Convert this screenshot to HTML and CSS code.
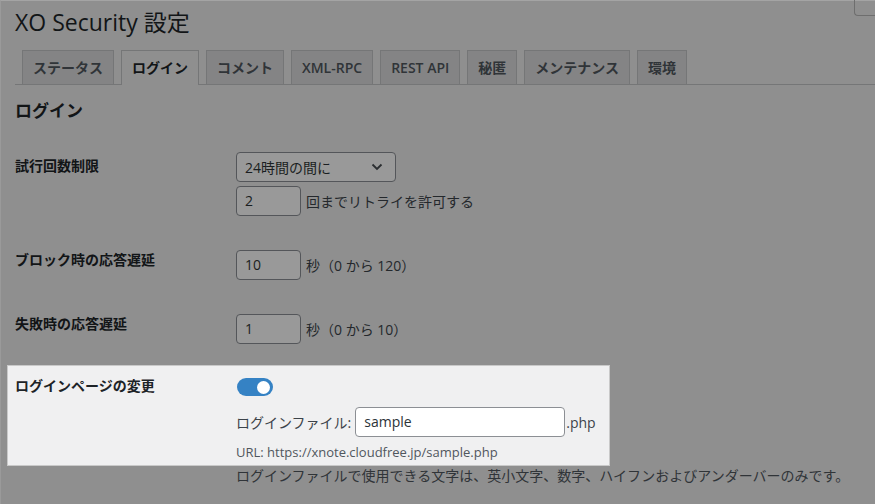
FILE: index.html
```html
<!DOCTYPE html>
<html lang="ja">
<head>
<meta charset="utf-8">
<title>XO Security 設定</title>
<link rel="stylesheet" href="styles.css">
</head>
<body>
<div class="page">
  <div class="header">
    <h1 class="title">XO Security 設定</h1>
    <div class="help-tab"></div>
  </div>
  <nav class="tabs">
    <span class="tab">ステータス</span>
    <span class="tab active">ログイン</span>
    <span class="tab">コメント</span>
    <span class="tab">XML-RPC</span>
    <span class="tab">REST API</span>
    <span class="tab">秘匿</span>
    <span class="tab">メンテナンス</span>
    <span class="tab">環境</span>
  </nav>
  <h2 class="section-title">ログイン</h2>

  <div class="row row-1">
    <div class="label label-1">試行回数制限</div>
    <div class="fields">
      <div class="select"><span>24時間の間に</span>
        <svg class="chev" width="12" height="8" viewBox="0 0 12 8"><path d="M1.5 1.5 L6 6 L10.5 1.5" fill="none" stroke="#2a2d30" stroke-width="1.8"/></svg>
      </div>
      <div class="inline"><span class="num">2</span><span class="after">回までリトライを許可する</span></div>
    </div>
  </div>

  <div class="row row-2">
    <div class="label">ブロック時の応答遅延</div>
    <div class="fields">
      <div class="inline"><span class="num">10</span><span class="after">秒（0 から 120）</span></div>
    </div>
  </div>

  <div class="row row-3">
    <div class="label">失敗時の応答遅延</div>
    <div class="fields">
      <div class="inline"><span class="num">1</span><span class="after">秒（0 から 10）</span></div>
    </div>
  </div>

  <div class="highlight">
    <div class="hl-label">ログインページの変更</div>
    <div class="hl-fields">
      <div class="toggle"><span class="knob"></span></div>
      <div class="file-row"><span class="file-label">ログインファイル:</span><span class="file-input">sample</span><span class="php">.php</span></div>
      <div class="url">URL: https://xnote.cloudfree.jp/sample.php</div>
    </div>
  </div>
  <p class="desc">ログインファイルで使用できる文字は、英小文字、数字、ハイフンおよびアンダーバーのみです。</p>
</div>
</body>
</html>
```

FILE: styles.css
```css
html, body {
  margin: 0;
  padding: 0;
  background: #8f8f8f;
  overflow: hidden;
}
body {
  width: 875px;
  height: 504px;
  font-family: "Open Sans", "Noto Sans CJK JP", sans-serif;
  font-size: 14px;
  color: #121517;
}
.page {
  height: 503px;
  border-top: 1px solid #a4a4a4;
  border-left: 1px solid #9a9a9a;
  padding-left: 14px;
}
.header {
  display: flex;
  justify-content: space-between;
  align-items: flex-start;
}
.title {
  margin: 7px 0 0 0;
  font-size: 23px;
  font-weight: 400;
  line-height: 29px;
  color: #121517;
}
.help-tab {
  width: 20px;
  height: 15px;
  border: 1px solid #6e6e6e;
  border-top: none;
  border-right: none;
  border-bottom-left-radius: 4px;
  margin-top: -1px;
}
.tabs {
  display: flex;
  gap: 7px;
  margin-top: 13px;
  padding-left: 7px;
  border-bottom: 1px solid #757677;
  height: 34px;
}
.tab {
  display: block;
  height: 34px;
  box-sizing: border-box;
  padding: 5px 10px 0;
  border: 1px solid #757677;
  border-bottom: none;
  background: #848485;
  color: #303438;
  font-weight: 600;
  line-height: 24px;
  white-space: nowrap;
}
.tab.active {
  background: #8f8f8f;
  color: #121517;
  height: 35px;
}
.section-title {
  margin: 14px 0 0 0;
  font-size: 17px;
  line-height: 24px;
  font-weight: 700;
}
.row {
  display: flex;
}
.row-1 { margin-top: 29px; }
.row-2 { margin-top: 34px; }
.row-3 { margin-top: 34px; }
.label {
  width: 221px;
  flex: none;
  font-weight: 700;
  line-height: 20px;
}
.label-1 { padding-top: 4px; }
.fields {
  display: flex;
  flex-direction: column;
  gap: 4px;
}
.select {
  width: 160px;
  height: 30px;
  box-sizing: border-box;
  border: 1px solid #54565a;
  border-radius: 4px;
  background: #999999;
  display: flex;
  align-items: center;
  justify-content: space-between;
  padding: 0 12px 0 8px;
  color: #1a1e21;
}
.inline {
  display: flex;
  align-items: center;
  gap: 5px;
}
.num {
  width: 65px;
  height: 30px;
  box-sizing: border-box;
  border: 1px solid #54565a;
  border-radius: 4px;
  background: #999999;
  padding-left: 8px;
  line-height: 28px;
  color: #1a1e21;
}
.after {
  color: #24282c;
}
.highlight {
  margin: 21px 0 0 -8px;
  width: 603px;
  box-sizing: border-box;
  background: #f0f0f1;
  border: 1px solid #c9c9c9;
  display: flex;
  padding: 10px 0 4px 7px;
  color: #1d2327;
}
.hl-label {
  width: 221px;
  flex: none;
  font-weight: 700;
  line-height: 20px;
}
.hl-fields {
  display: flex;
  flex-direction: column;
}
.toggle {
  width: 36px;
  height: 18px;
  border-radius: 9px;
  background: #3582c4;
  margin: 2px 0 0 1px;
  display: flex;
  align-items: center;
  justify-content: flex-end;
  padding-right: 3px;
  box-sizing: border-box;
}
.knob {
  width: 13px;
  height: 13px;
  border-radius: 50%;
  background: #fff;
}
.file-row {
  display: flex;
  align-items: center;
  margin-top: 11px;
  color: #3c434a;
}
.file-label {
  margin-right: 4px;
}
.file-input {
  width: 210px;
  height: 30px;
  box-sizing: border-box;
  border: 1px solid #8c8f94;
  border-radius: 4px;
  background: #fff;
  padding-left: 8px;
  line-height: 28px;
  color: #2c3338;
}
.php {
  margin-left: 1px;
}
.url {
  margin-top: 6px;
  font-size: 13px;
  line-height: 18px;
  color: #50575e;
}
.desc {
  margin: 0 0 0 221px;
  line-height: 20px;
  color: #303438;
}
```
